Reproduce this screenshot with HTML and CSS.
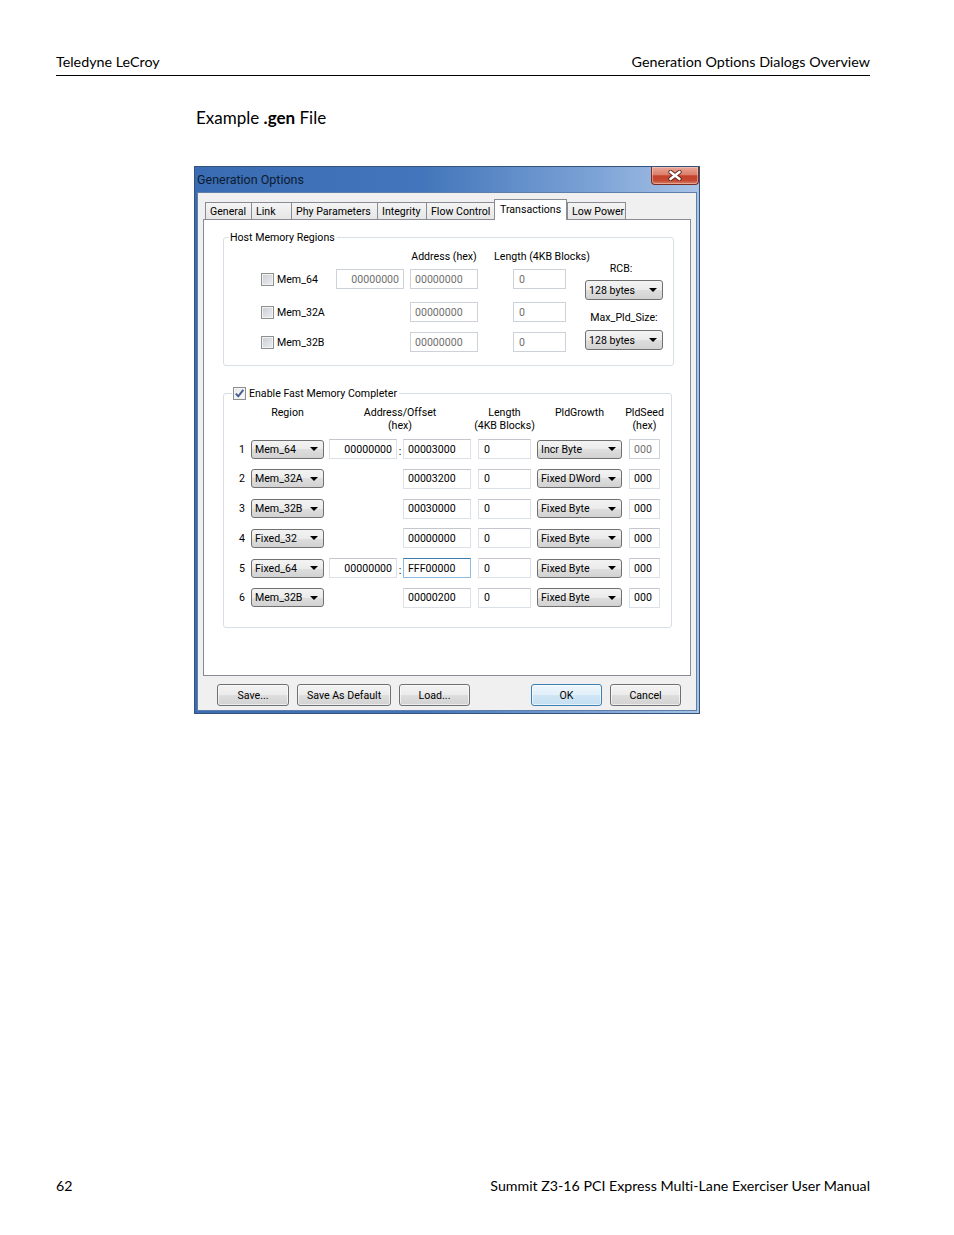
FILE: index.html
```html
<!DOCTYPE html>
<html lang="en">
<head>
    <meta charset="UTF-8">
    <meta name="viewport" content="width=device-width, initial-scale=1.0">
    <title>Generation Options Dialogs Overview</title>
    <link rel="stylesheet" href="styles.css">
</head>
<body>
<div class="page">

    <header class="page-header">
        <span>Teledyne LeCroy</span>
        <span>Generation Options Dialogs Overview</span>
    </header>

    <p class="caption">Example <strong>.gen</strong> File</p>

    <!-- Generation Options dialog -->
    <div class="window">
        <div class="titlebar">
            <span class="title">Generation Options</span>
            <span class="close-btn">
                <svg width="14" height="11" viewBox="0 0 14 11">
                    <path d="M2.5 2 L11.5 9 M11.5 2 L2.5 9" stroke="#5c2118" stroke-width="4.2" stroke-linecap="round"/>
                    <path d="M2.5 2 L11.5 9 M11.5 2 L2.5 9" stroke="#fff" stroke-width="2.6" stroke-linecap="round"/>
                </svg>
            </span>
        </div>

        <div class="client">
            <div class="tabs">
                <span class="tab">General</span>
                <span class="tab">Link</span>
                <span class="tab">Phy Parameters</span>
                <span class="tab">Integrity</span>
                <span class="tab">Flow Control</span>
                <span class="tab is-active">Transactions</span>
                <span class="tab">Low Power</span>
            </div>

            <div class="tab-panel">

                <!-- Host Memory Regions -->
                <div class="group host-group">
                    <div class="group-title">Host Memory Regions</div>
                    <div class="host-body">
                        <div class="host-grid">
                            <span></span>
                            <span></span>
                            <span class="col-head">Address (hex)</span>
                            <span class="col-head col-head-len">Length (4KB Blocks)</span>

                            <span class="check-label"><span class="checkbox"></span>Mem_64</span>
                            <span class="field is-disabled field-right">00000000</span>
                            <span class="field is-disabled">00000000</span>
                            <span class="field field-len is-disabled">0</span>

                            <span class="check-label"><span class="checkbox"></span>Mem_32A</span>
                            <span></span>
                            <span class="field is-disabled">00000000</span>
                            <span class="field field-len is-disabled">0</span>

                            <span class="check-label"><span class="checkbox"></span>Mem_32B</span>
                            <span></span>
                            <span class="field is-disabled">00000000</span>
                            <span class="field field-len is-disabled">0</span>
                        </div>

                        <div class="host-side">
                            <span class="side-label side-label-rcb">RCB:</span>
                            <span class="combo combo-side">128 bytes</span>
                            <span class="side-label side-label-max">Max_Pld_Size:</span>
                            <span class="combo combo-side combo-side-last">128 bytes</span>
                        </div>
                    </div>
                </div>

                <!-- Fast Memory Completer -->
                <div class="group fm-group">
                    <div class="group-title fm-title">
                        <span class="checkbox is-checked">
                            <svg width="11" height="11" viewBox="0 0 11 11">
                                <path d="M1.8 5.6 L4.3 8.3 L9.3 1.8" fill="none" stroke="#4b5f8e" stroke-width="2"/>
                            </svg>
                        </span>
                        Enable Fast Memory Completer
                    </div>

                    <div class="fm-cols fm-head">
                        <span class="head h-region">Region</span>
                        <span class="head h-addr"><span>Address/Offset</span><span>(hex)</span></span>
                        <span class="head h-len"><span>Length</span><span>(4KB Blocks)</span></span>
                        <span class="head h-growth">PldGrowth</span>
                        <span class="head h-seed"><span>PldSeed</span><span>(hex)</span></span>
                    </div>

                    <div class="fm-cols fm-rows">
                        <span class="row-num">1</span>
                        <span class="combo combo-region">Mem_64</span>
                        <span class="field field-right">00000000</span>
                        <span class="colon">:</span>
                        <span class="field">00003000</span>
                        <span class="field field-len">0</span>
                        <span class="combo combo-growth">Incr Byte</span>
                        <span class="field field-seed is-disabled">000</span>

                        <span class="row-num">2</span>
                        <span class="combo combo-region">Mem_32A</span>
                        <span></span>
                        <span></span>
                        <span class="field">00003200</span>
                        <span class="field field-len">0</span>
                        <span class="combo combo-growth">Fixed DWord</span>
                        <span class="field field-seed">000</span>

                        <span class="row-num">3</span>
                        <span class="combo combo-region">Mem_32B</span>
                        <span></span>
                        <span></span>
                        <span class="field">00030000</span>
                        <span class="field field-len">0</span>
                        <span class="combo combo-growth">Fixed Byte</span>
                        <span class="field field-seed">000</span>

                        <span class="row-num">4</span>
                        <span class="combo combo-region">Fixed_32</span>
                        <span></span>
                        <span></span>
                        <span class="field">00000000</span>
                        <span class="field field-len">0</span>
                        <span class="combo combo-growth">Fixed Byte</span>
                        <span class="field field-seed">000</span>

                        <span class="row-num">5</span>
                        <span class="combo combo-region">Fixed_64</span>
                        <span class="field field-right">00000000</span>
                        <span class="colon">:</span>
                        <span class="field is-focused">FFF00000</span>
                        <span class="field field-len">0</span>
                        <span class="combo combo-growth">Fixed Byte</span>
                        <span class="field field-seed">000</span>

                        <span class="row-num">6</span>
                        <span class="combo combo-region">Mem_32B</span>
                        <span></span>
                        <span></span>
                        <span class="field">00000200</span>
                        <span class="field field-len">0</span>
                        <span class="combo combo-growth">Fixed Byte</span>
                        <span class="field field-seed">000</span>
                    </div>
                </div>

            </div>

            <div class="btn-row">
                <span class="btn btn-save">Save...</span>
                <span class="btn btn-wide">Save As Default</span>
                <span class="btn">Load...</span>
                <span class="btn btn-default">OK</span>
                <span class="btn">Cancel</span>
            </div>
        </div>
    </div>

    <footer class="page-footer">
        <span>62</span>
        <span>Summit Z3-16 PCI Express Multi-Lane Exerciser User Manual</span>
    </footer>

</div>
</body>
</html>
```

FILE: styles.css
```css
* {
    box-sizing: border-box;
    margin: 0;
    padding: 0;
}

body {
    background: #fff;
    color: #000;
    font-family: 'Lato', 'Liberation Sans', sans-serif;
    font-variant-ligatures: none;
}

.page {
    width: 954px;
    height: 1235px;
    padding: 53px 84px 40px 56px;
    display: flex;
    flex-direction: column;
}

/* Page header / footer */
.page-header {
    display: flex;
    justify-content: space-between;
    font-size: 14.3px;
    line-height: 18px;
    padding-bottom: 4px;
    border-bottom: 1px solid #000;
}

.caption {
    margin: 32px 0 0 140px;
    font-size: 17px;
    line-height: 20px;
}

.page-footer {
    margin-top: auto;
    display: flex;
    justify-content: space-between;
    font-size: 14.2px;
    line-height: 18px;
}

/* Dialog window */
.window {
    width: 506px;
    margin: 38px 0 0 138px;
    border: 1px solid #34547e;
    background: linear-gradient(90deg, #3a6cb4, #4275bb 45%, #7ea4d6 80%, #a9c3e6);
    font-family: 'Roboto', 'Liberation Sans', sans-serif;
    font-size: 10.6px;
    color: #000;
}

.titlebar {
    height: 25px;
    display: flex;
    justify-content: space-between;
    align-items: flex-start;
}

.title {
    padding-left: 2px;
    line-height: 25px;
    font-size: 12.5px;
    color: #0c1b30;
}

.close-btn {
    width: 48px;
    height: 18px;
    display: flex;
    align-items: center;
    justify-content: center;
    border: 1px solid #7a2c22;
    border-top: none;
    border-radius: 0 0 4px 4px;
    background: linear-gradient(#e9a596, #dc7f6c 45%, #c6412b 52%, #c44a33 80%, #d9806a);
    box-shadow: inset 0 0 0 1px rgba(255, 220, 210, 0.45);
}

.client {
    height: 519px;
    margin: 0 2px 2px;
    background: #f0f0f0;
    border: 1px solid #5f7faa;
    padding: 6px 5px 0;
}

/* Tabs */
.tabs {
    display: grid;
    grid-template-columns: 46px 40px 86px 49px 68px 73px 59px;
    align-items: end;
    height: 20px;
    margin-left: 2px;
}

.tab {
    height: 17px;
    padding-left: 4px;
    line-height: 17px;
    white-space: nowrap;
    border-top: 1px solid #898c95;
    border-left: 1px solid #898c95;
    background: linear-gradient(#f4f4f4, #e6e6e6);
}

.tab:last-child {
    border-right: 1px solid #898c95;
}

.tab.is-active {
    position: relative;
    z-index: 1;
    height: 21px;
    margin-bottom: -1px;
    padding-left: 5px;
    line-height: 19px;
    border-right: 1px solid #898c95;
    background: #fff;
}

.tab-panel {
    height: 457px;
    background: #fff;
    border: 1px solid #898c95;
    padding: 17px 0 0 19px;
}

/* Group boxes */
.group {
    border: 1px solid #d5dfe5;
    border-radius: 3px;
}

.group-title {
    display: flex;
    align-items: center;
    width: fit-content;
    height: 13px;
    margin: -7px 0 0 5px;
    padding: 0 2px 0 1px;
    background: #fff;
    line-height: 13px;
    white-space: nowrap;
}

.host-group {
    width: 451px;
    padding-bottom: 13px;
}

.host-body {
    display: flex;
    align-items: flex-start;
    margin-top: 6px;
    padding-left: 37px;
}

.host-grid {
    display: grid;
    grid-template-columns: 75px 74px 103px 53px;
    grid-template-rows: 19px 33px 30px 20px;
    align-items: start;
}

.col-head {
    display: flex;
    justify-content: center;
    width: 68px;
    line-height: 14px;
    white-space: nowrap;
}

.col-head-len {
    width: 53px;
    padding-left: 5px;
}

.check-label {
    display: flex;
    align-items: center;
    gap: 3px;
    height: 20px;
}

.host-side {
    display: flex;
    flex-direction: column;
    width: 78px;
    margin-left: 19px;
}

.side-label {
    text-align: center;
    line-height: 14px;
    white-space: nowrap;
}

.side-label-rcb {
    margin-top: 12px;
    padding-right: 6px;
}

.side-label-max {
    margin-top: 11px;
}

.combo-side {
    margin-top: 4px;
}

.combo-side-last {
    margin-top: 5px;
}

/* Checkboxes */
.checkbox {
    flex: none;
    display: flex;
    align-items: center;
    justify-content: center;
    width: 13px;
    height: 13px;
    border: 1px solid #8e8f8f;
    background: linear-gradient(135deg, #c9cdd3, #eceef1);
    box-shadow: inset 0 0 0 1px #f2f2f2;
}

.checkbox.is-checked {
    background: linear-gradient(135deg, #e4e7ec, #fdfdfd);
}

/* Text fields */
.field {
    display: flex;
    align-items: center;
    width: 68px;
    height: 20px;
    padding: 0 4px;
    border: 1px solid #dce1e7;
    border-top-color: #c3c7cd;
    background: #fff;
    white-space: nowrap;
}

.field-right {
    justify-content: flex-end;
}

.field-len {
    width: 53px;
    padding-left: 5px;
}

.field-seed {
    width: 31px;
}

.field.is-disabled {
    color: #6f6f6f;
    border-color: #cdd2d8;
}

.field.is-focused {
    border-color: #8fbbe0;
    border-top-color: #3d7bad;
}

/* Combo boxes */
.combo {
    display: flex;
    align-items: center;
    justify-content: space-between;
    height: 20px;
    padding: 0 5px 0 3px;
    border: 1px solid #707070;
    border-radius: 3px;
    background: linear-gradient(#f3f3f3, #ebebeb 50%, #dedede 50%, #d2d2d2);
    white-space: nowrap;
}

.combo::after {
    content: '';
    border-left: 4px solid transparent;
    border-right: 4px solid transparent;
    border-top: 4px solid #000;
}

/* Fast memory completer table */
.fm-group {
    width: 449px;
    margin-top: 27px;
    padding-bottom: 19px;
}

.fm-title {
    gap: 3px;
    margin-left: 8px;
}

.fm-cols {
    display: grid;
    grid-template-columns: 17px 78px 68px 6px 75px 59px 92px 31px;
    margin-left: 10px;
}

.fm-head {
    margin: 6px 0 7px 10px;
    line-height: 13px;
}

.head {
    display: flex;
    flex-direction: column;
    align-items: center;
    white-space: nowrap;
}

.h-region { grid-column: 2; width: 73px; }
.h-addr { grid-column: 3 / 6; padding-right: 7px; }
.h-len { grid-column: 6; width: 53px; }
.h-growth { grid-column: 7; width: 85px; }
.h-seed { grid-column: 8; }

.fm-rows {
    grid-auto-rows: 20px;
    row-gap: 9.8px;
    align-items: center;
}

.row-num {
    text-align: right;
    padding-right: 6px;
}

.combo-region {
    width: 73px;
    height: 19px;
}

.combo-growth {
    width: 85px;
    height: 19px;
}

.colon {
    text-align: center;
    padding-top: 5px;
}

/* Buttons */
.btn-row {
    display: flex;
    gap: 8px;
    margin-top: 8px;
    padding: 0 10px 0 14px;
}

.btn {
    display: flex;
    align-items: center;
    justify-content: center;
    width: 71px;
    height: 22px;
    border: 1px solid #707070;
    border-radius: 3px;
    background: linear-gradient(#f3f3f3, #ebebeb 50%, #dedede 50%, #d2d2d2);
    box-shadow: inset 0 0 0 1px rgba(255, 255, 255, 0.6);
}

.btn-save {
    width: 72px;
}

.btn-wide {
    width: 94px;
}

.btn-default {
    margin-left: auto;
    border-color: #3c7fb1;
    background: linear-gradient(#eef6fc, #e1eff9 50%, #d0e6f5 50%, #c5dff1);
}
```
